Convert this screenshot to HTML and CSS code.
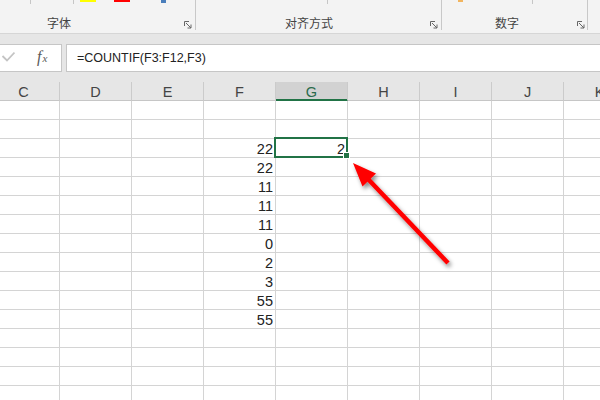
FILE: index.html
```html
<!DOCTYPE html>
<html>
<head>
  <title>COUNTIF</title>
  <meta charset="utf-8">
  <link rel="stylesheet" href="styles.css">
</head>
<body>

  <div class="ribbon">
    <div class="group g1">
      <div class="bits">
        <span class="tick t1"></span>
        <span class="tick t2"></span>
        <span class="swatch yellow"></span>
        <span class="swatch red"></span>
        <span class="swatch blue"></span>
      </div>
      <div class="foot">
        <span class="label l1">字体</span>
        <svg class="launch" viewBox="0 0 8 8"><path d="M0.5 5V0.5H5M2 2L7 7M7 3.5V7H3.5" fill="none" stroke="#666" stroke-width="1"/></svg>
      </div>
    </div>
    <div class="group g2">
      <div class="bits">
        <span class="tick t3"></span>
      </div>
      <div class="foot">
        <span class="label l2">对齐方式</span>
        <svg class="launch" viewBox="0 0 8 8"><path d="M0.5 5V0.5H5M2 2L7 7M7 3.5V7H3.5" fill="none" stroke="#666" stroke-width="1"/></svg>
      </div>
    </div>
    <div class="group g3">
      <div class="bits">
        <span class="swatch orange"></span>
        <span class="tick t4"></span>
      </div>
      <div class="foot">
        <span class="label l3">数字</span>
        <svg class="launch last" viewBox="0 0 8 8"><path d="M0.5 5V0.5H5M2 2L7 7M7 3.5V7H3.5" fill="none" stroke="#666" stroke-width="1"/></svg>
      </div>
    </div>
  </div>

  <div class="bar">
    <div class="namebox">
      <svg class="check" viewBox="0 0 14 26"><path d="M1.5 11L6 15.5L13.5 7.5" fill="none" stroke="#c4c4c4" stroke-width="1.8"/></svg>
      <span class="fx"><i>f</i><i class="sub">x</i></span>
    </div>
    <div class="formula">=COUNTIF(F3:F12,F3)</div>
  </div>

  <div class="sheet"></div>

  <svg class="arrow" width="600" height="400" viewBox="0 0 600 400">
    <defs>
      <filter id="shadow" x="-20%" y="-20%" width="140%" height="140%">
        <feDropShadow dx="2" dy="3" stdDeviation="2" flood-color="#000" flood-opacity="0.45"/>
      </filter>
    </defs>
    <g filter="url(#shadow)">
      <line x1="368" y1="179" x2="448" y2="263" stroke="#ff0000" stroke-width="4.5"/>
      <polygon points="353,163 362.5,186.5 376,173.5" fill="#ff0000"/>
    </g>
  </svg>

  <script type="text/javascript">
    var cols = ['C','D','E','F','G','H','I','J','K']
    var data = {3:22, 4:22, 5:11, 6:11, 7:11, 8:0, 9:2, 10:3, 11:55, 12:55}
    var sheet = document.querySelector('.sheet')

    /*列标题*/
    for (var i = 0; i < cols.length; i++) {
      var hd = document.createElement('div')
      hd.className = cols[i] == 'G' ? 'hd on' : 'hd'
      hd.innerText = cols[i]
      sheet.appendChild(hd)
    }

    /*单元格*/
    for (var r = 1; r <= 16; r++) {
      for (var i = 0; i < cols.length; i++) {
        var c = document.createElement('div')
        c.className = 'c'
        if (cols[i] == 'F' && data[r] !== undefined) {
          c.innerText = data[r]
        }
        if (cols[i] == 'G' && r == 3) {
          c.className = 'c sel'
          c.innerText = 2
        }
        sheet.appendChild(c)
      }
    }
  </script>
</body>
</html>
```

FILE: styles.css
```css
body {
  margin: 0;
  width: 600px;
  height: 400px;
  overflow: hidden;
  position: relative;
  background: #fff;
  font-family: "Liberation Sans", Arial, sans-serif;
}

/* ribbon */
.ribbon {
  display: flex;
  height: 33px;
  background: #f3f3f3;
  border-bottom: 1px solid #d6d6d6;
}
.group {
  flex: none;
  height: 30px;
  display: flex;
  flex-direction: column;
  justify-content: space-between;
  border-right: 1px solid #c8c8c8;
}
.g1 { width: 195px; }
.g2 { width: 245px; }
.g3 { width: 145px; }

.bits {
  display: flex;
  align-items: flex-start;
  height: 4px;
}
.tick {
  width: 1px;
  height: 4px;
  background: #c6c6c6;
}
.t1 { margin-left: 30px; }
.t2 { margin-left: 42px; }
.t3 { margin-left: 131px; }
.t4 { margin-left: 69px; }

.swatch {
  width: 16px;
  height: 2px;
}
.yellow { margin-left: 6px; background: #ffff00; }
.red { margin-left: 18px; background: #ff0000; }
.blue { margin-left: 31px; width: 5px; height: 3px; background: #4a7ebb; }
.orange { margin-left: 16px; width: 5px; height: 2px; background: #f2b55f; }

.foot {
  display: flex;
  align-items: flex-end;
  height: 16px;
}
.label {
  font-family: "Noto Sans CJK SC", sans-serif;
  font-size: 12px;
  line-height: 14px;
  color: #444;
}
.l1 { margin-left: 47px; }
.l2 { margin-left: 89px; }
.l3 { margin-left: 53px; }
.launch {
  width: 8px;
  height: 8px;
  margin-left: auto;
  margin-right: 3px;
  margin-bottom: 1px;
}
.launch.last { margin-right: 2px; }

/* formula bar */
.bar {
  display: flex;
  padding: 10px 0;
  background: #e6e6e6;
}
.namebox {
  width: 63px;
  height: 28px;
  margin-left: -1px;
  box-sizing: border-box;
  border: 1px solid #c6c6c6;
  background: #fff;
  display: flex;
  align-items: flex-start;
}
.check {
  width: 14px;
  height: 26px;
  margin-left: 1px;
}
.fx {
  margin-left: 22px;
  margin-top: 4px;
  font-family: "Liberation Serif", serif;
  font-size: 16px;
  line-height: 16px;
  color: #5a5a5a;
}
.fx .sub {
  font-size: 11px;
  margin-left: 1px;
}
.formula {
  flex: 1;
  height: 28px;
  margin-left: 4px;
  box-sizing: border-box;
  border: 1px solid #c6c6c6;
  border-right: none;
  background: #fff;
  padding-left: 10px;
  font-size: 12.5px;
  line-height: 26px;
  color: #222;
}

/* sheet */
.sheet {
  display: grid;
  grid-template-columns: repeat(9, 72px);
  margin-left: -12px;
}
.hd {
  height: 19px;
  box-sizing: border-box;
  padding-top: 3px;
  background: #e6e6e6;
  border-right: 1px solid #cbcbcb;
  border-bottom: 1px solid #c6c6c6;
  text-align: center;
  font-size: 14.5px;
  line-height: 15px;
  color: #444;
}
.hd.on {
  background: #d2d2d2;
  color: #2a6a4c;
  border-bottom-color: #217346;
  box-shadow: inset 0 -1px #217346;
}
.c {
  height: 19px;
  box-sizing: border-box;
  padding: 3px 2px 0 0;
  border-right: 1px solid #d4d4d4;
  border-bottom: 1px solid #d4d4d4;
  text-align: right;
  font-size: 14.5px;
  line-height: 15px;
  color: #222;
}
.sel {
  position: relative;
}
.sel::after {
  content: "";
  position: absolute;
  top: -2px;
  left: -2px;
  right: -1px;
  bottom: -1px;
  border: 2px solid #217346;
}
.sel::before {
  content: "";
  position: absolute;
  right: -3px;
  bottom: -2px;
  width: 5px;
  height: 5px;
  background: #217346;
  border: 1px solid #fff;
  z-index: 1;
}

.arrow {
  position: absolute;
  left: 0;
  top: 0;
  pointer-events: none;
}
```
